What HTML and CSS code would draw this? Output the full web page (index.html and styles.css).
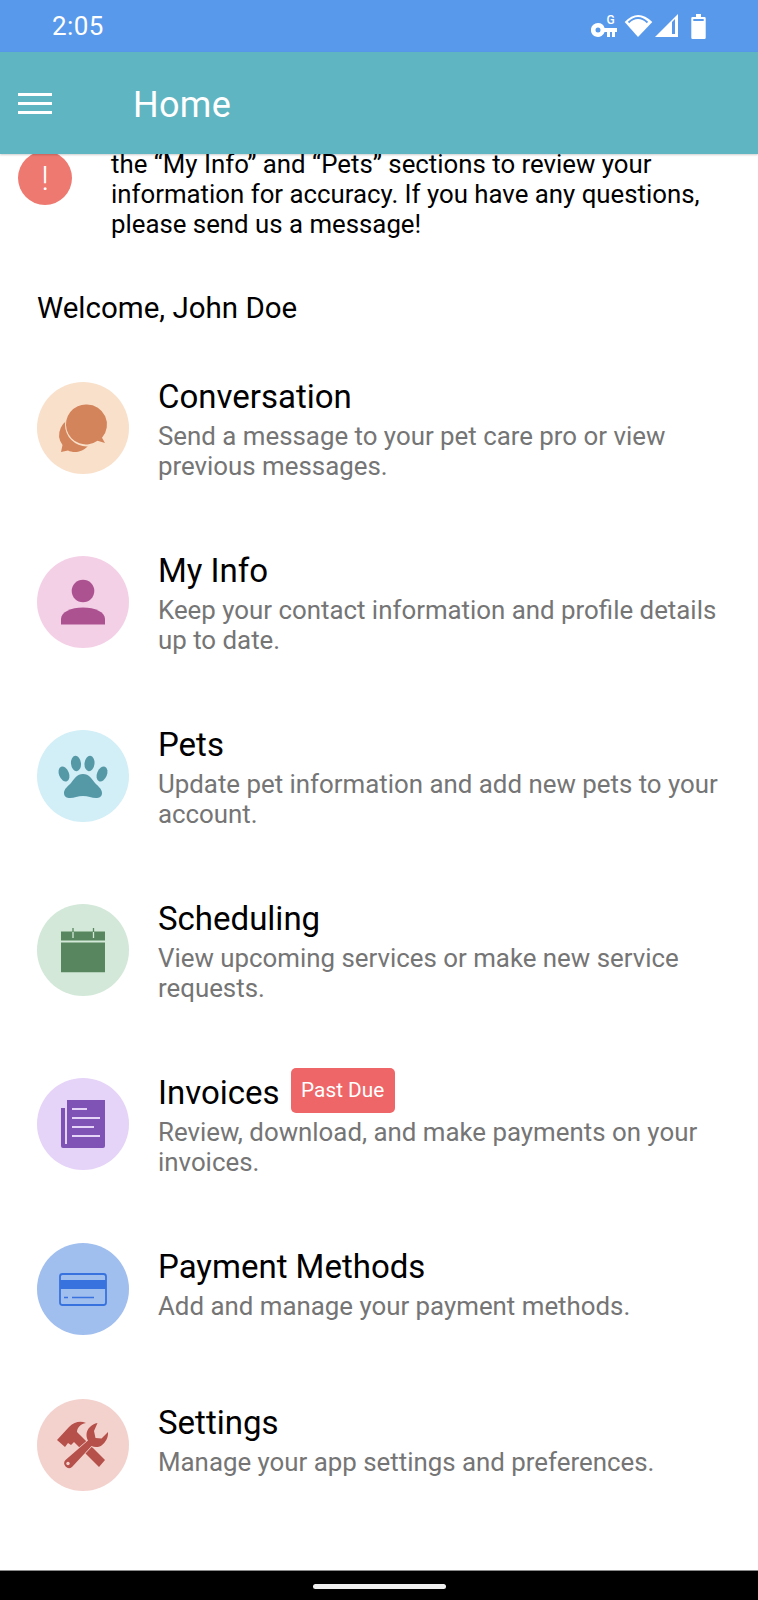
FILE: index.html
```html
<!DOCTYPE html>
<html lang="en">
<head>
    <meta charset="UTF-8">
    <meta name="viewport" content="width=device-width, initial-scale=1.0">
    <title>Home</title>
    <link rel="stylesheet" href="styles.css">
</head>
<body>
    <div class="status-bar">
        <span class="status-time">2:05</span>
        <svg class="status-icons" width="116" height="30" viewBox="0 0 116 30">
            <path fill-rule="evenodd" fill="#fff" d="M7 12a7 7 0 0 1 6.600 5H26v4h-2v5h-3v-5h-2v5h-3v-5h-2.400a7 7 0 1 1-6.600-9zm0 4.500a2.500 2.500 0 1 0 0 5 2.500 2.500 0 0 0 0-5z"/>
            <text x="15.500" y="13" class="status-g">G</text>
            <path fill="#fff" d="M33.700 11Q47-3 61.300 11L47 26z"/>
            <path fill="none" stroke="#5899ec" stroke-width="1.800" d="M37.500 11.500Q47 2.500 56.500 11.500"/>
            <path fill="#fff" d="M64 26L87 3v23z"/>
            <path fill="#5899ec" d="M81 11l3-3v15h-3z"/>
            <path fill="#fff" d="M105 3h5v3h3.500a1.200 1.200 0 0 1 1.200 1.200v19.600a1.200 1.200 0 0 1-1.200 1.200h-12a1.200 1.200 0 0 1-1.200-1.200V7.200A1.200 1.200 0 0 1 101.500 6h3.500z"/>
            <path fill="#5899ec" d="M102.300 8h10.400v2h-10.400z"/>
        </svg>
    </div>

    <header class="app-bar">
        <div class="menu-icon">
            <span></span>
            <span></span>
            <span></span>
        </div>
        <h1>Home</h1>
    </header>

    <main class="content">
        <div class="alert">
            <div class="alert-icon">!</div>
            <p>the “My Info” and “Pets” sections to review your information for accuracy. If you have any questions, please send us a message!</p>
        </div>

        <p class="welcome">Welcome, John Doe</p>

        <div class="menu-list">
            <div class="menu-row">
                <div class="menu-icon-circle circle-orange">
                    <svg width="92" height="92" viewBox="0 0 92 92">
                        <path fill="#d4845b" d="M38 36a17 17 0 0 1 4 33.500c-4 1-8 .500-11-1L24 70l1.500-7A17 17 0 0 1 38 36z"/>
                        <circle cx="50" cy="42.500" r="22" fill="#f9e0ca"/>
                        <path fill="#d4845b" d="M50 22.500a20 20 0 0 1 15 33.200L68 61l-7.500-2.200A20 20 0 1 1 50 22.500z"/>
                    </svg>
                </div>
                <div class="menu-text">
                    <h2>Conversation</h2>
                    <p>Send a message to your pet care pro or view previous messages.</p>
                </div>
            </div>

            <div class="menu-row">
                <div class="menu-icon-circle circle-pink">
                    <svg width="92" height="92" viewBox="0 0 92 92">
                        <circle cx="46" cy="35" r="11.300" fill="#ac5291"/>
                        <path fill="#ac5291" d="M24 68.500v-5.500c0-7 10-11.500 22-11.500s22 4.500 22 11.500v5.500z"/>
                    </svg>
                </div>
                <div class="menu-text">
                    <h2>My Info</h2>
                    <p>Keep your contact information and profile details up to date.</p>
                </div>
            </div>

            <div class="menu-row">
                <div class="menu-icon-circle circle-blue">
                    <svg width="92" height="92" viewBox="0 0 92 92">
                        <g fill="#5598a6">
                            <ellipse cx="27" cy="44" rx="5" ry="7.800" transform="rotate(-22 27 44)"/>
                            <ellipse cx="39" cy="33.500" rx="5" ry="7.800" transform="rotate(-6 39 33.500)"/>
                            <ellipse cx="52.500" cy="33.500" rx="5" ry="7.800" transform="rotate(6 52.500 33.500)"/>
                            <ellipse cx="65" cy="44" rx="5" ry="7.800" transform="rotate(22 65 44)"/>
                            <path d="M46 44c6 0 9 5 12 9 3 3 7 6 7 10 0 4-3 5-6 5-4 0-8-2-13-2s-9 2-13 2c-3 0-6-1-6-5 0-4 4-7 7-10 3-4 6-9 12-9z"/>
                        </g>
                    </svg>
                </div>
                <div class="menu-text">
                    <h2>Pets</h2>
                    <p>Update pet information and add new pets to your account.</p>
                </div>
            </div>

            <div class="menu-row">
                <div class="menu-icon-circle circle-green">
                    <svg width="92" height="92" viewBox="0 0 92 92">
                        <path fill="#58875f" d="M24 27.500h44v9H24zM24 38.500h44v29.700H24z"/>
                        <path stroke="#d3e8d8" stroke-width="1.300" d="M36 27.500v6.500M56.500 27.500v6.500"/>
                        <path stroke="#58875f" stroke-width="1.300" d="M36 24v4M56.500 24v4"/>
                    </svg>
                </div>
                <div class="menu-text">
                    <h2>Scheduling</h2>
                    <p>View upcoming services or make new service requests.</p>
                </div>
            </div>

            <div class="menu-row">
                <div class="menu-icon-circle circle-purple">
                    <svg width="92" height="92" viewBox="0 0 92 92">
                        <path fill="#7f52b5" d="M30 22h38v46a2 2 0 0 1-2 2H26a2 2 0 0 1-2-2V30h4v36h2z"/>
                        <path stroke="#e5d3f8" stroke-width="1.800" d="M35 31h15M35 40h28M35 49h22M35 58h28"/>
                    </svg>
                </div>
                <div class="menu-text">
                    <h2>Invoices <span class="badge">Past Due</span></h2>
                    <p>Review, download, and make payments on your invoices.</p>
                </div>
            </div>

            <div class="menu-row menu-row-short">
                <div class="menu-icon-circle circle-navy">
                    <svg width="92" height="92" viewBox="0 0 92 92">
                        <rect x="23" y="31" width="46" height="31" rx="2.500" fill="none" stroke="#3872de" stroke-width="1.800"/>
                        <path fill="#3872de" d="M23 37h46v9H23z"/>
                        <path stroke="#3872de" stroke-width="1.600" d="M27 54.500h4M35 54.500h22"/>
                    </svg>
                </div>
                <div class="menu-text">
                    <h2>Payment Methods</h2>
                    <p>Add and manage your payment methods.</p>
                </div>
            </div>

            <div class="menu-row menu-row-short">
                <div class="menu-icon-circle circle-red">
                    <svg width="92" height="92" viewBox="0 0 92 92">
                        <path fill="#b5504a" d="M20 41l12-13c6-6 12-6 17-4-6 1-9 5-9 9l3 3 25 25-6 7-25-25-3 3-3-2-3 4z"/>
                        <path fill="#b5504a" stroke="#f3d2ce" stroke-width="1.500" paint-order="stroke" d="M60.500 24c-6 1-11 6-11 12 0 2 .5 4 1.500 5.500L28.500 61a4.800 4.800 0 0 0 6.500 7l19.500-21c3 1.500 7 1.500 10-.5 4-3 7-8 6.500-13.500l-6.500 6.500-6-.5-1.500-7z"/>
                        <circle cx="31" cy="64.500" r="1.700" fill="#f3d2ce"/>
                    </svg>
                </div>
                <div class="menu-text">
                    <h2>Settings</h2>
                    <p>Manage your app settings and preferences.</p>
                </div>
            </div>
        </div>
    </main>

    <div class="nav-bar">
        <span class="home-pill"></span>
    </div>
</body>
</html>
```

FILE: styles.css
```css
body {
    font-family: 'Roboto', sans-serif;
    margin: 0;
    padding: 0;
    width: 758px;
    height: 1600px;
    display: flex;
    flex-direction: column;
    overflow: hidden;
    background-color: #ffffff;
}

.status-bar {
    height: 52px;
    flex-shrink: 0;
    background-color: #5899ec;
    color: #ffffff;
    display: flex;
    align-items: center;
    justify-content: space-between;
    padding: 0 51px 0 52px;
}

.status-time {
    font-size: 26px;
    letter-spacing: 0.4px;
}

.status-icons {
    display: block;
}

.status-g {
    font-family: 'Roboto', sans-serif;
    font-size: 12px;
    font-weight: 500;
    fill: #ffffff;
}

.app-bar {
    height: 102px;
    flex-shrink: 0;
    background-color: #5fb5c1;
    color: #ffffff;
    display: flex;
    align-items: center;
    gap: 81px;
    padding-left: 18px;
    box-shadow: 0 1px 2px rgba(0, 0, 0, 0.2);
    position: relative;
    z-index: 1;
}

.app-bar h1 {
    font-size: 36px;
    font-weight: 400;
    letter-spacing: 0.3px;
    margin: 4px 0 0;
}

.menu-icon {
    width: 34px;
    display: flex;
    flex-direction: column;
    gap: 6px;
}

.menu-icon span {
    height: 3px;
    background-color: #ffffff;
}

.content {
    flex: 1;
}

.alert {
    display: flex;
    align-items: flex-start;
    gap: 39px;
    margin-top: -4px;
    padding: 1px 40px 0 18px;
}

.alert-icon {
    width: 54px;
    height: 54px;
    flex-shrink: 0;
    border-radius: 50%;
    background-color: #ee7970;
    color: #ffffff;
    font-size: 34px;
    font-weight: 300;
    line-height: 54px;
    text-align: center;
}

.alert p {
    font-size: 25.8px;
    line-height: 30px;
    margin: -2px 0 0;
    color: #000000;
}

.welcome {
    font-size: 29.5px;
    line-height: 32px;
    margin: 53px 0 0 37px;
    color: #000000;
}

.menu-list {
    display: flex;
    flex-direction: column;
    gap: 64px;
    margin-top: 49px;
    padding-left: 37px;
}

.menu-row {
    display: flex;
    align-items: center;
    gap: 29px;
    padding-right: 30px;
}

.menu-icon-circle {
    width: 92px;
    height: 92px;
    flex-shrink: 0;
    border-radius: 50%;
}

.menu-icon-circle svg {
    display: block;
}

.circle-orange { background-color: #f9e0ca; }
.circle-pink { background-color: #f4d0e7; }
.circle-blue { background-color: #d2eef7; }
.circle-green { background-color: #d3e8d8; }
.circle-purple { background-color: #e5d3f8; }
.circle-navy { background-color: #a0beee; }
.circle-red { background-color: #f3d2ce; }

.menu-text {
    flex: 1;
    padding: 6px 0 2px;
}

.menu-row-short .menu-text {
    padding-bottom: 14px;
}

.menu-text h2 {
    font-size: 33px;
    font-weight: 400;
    line-height: 36px;
    margin: 0 0 6px;
    color: #000000;
    display: flex;
    align-items: center;
    gap: 11px;
}

.menu-text p {
    font-size: 25.85px;
    line-height: 30px;
    margin: 0;
    color: #757575;
}

.badge {
    background-color: #ee6668;
    color: #ffffff;
    font-size: 20.8px;
    line-height: 45px;
    padding: 0 10.5px;
    border-radius: 5px;
    margin: -15px 0 -9px;
}

.nav-bar {
    height: 30px;
    flex-shrink: 0;
    background-color: #000000;
    border-top: 1px solid #8a8a8a;
    box-sizing: border-box;
    display: flex;
    justify-content: center;
    padding-top: 13px;
}

.home-pill {
    width: 133px;
    height: 5px;
    border-radius: 3px;
    background-color: #f0f0f0;
}
```
